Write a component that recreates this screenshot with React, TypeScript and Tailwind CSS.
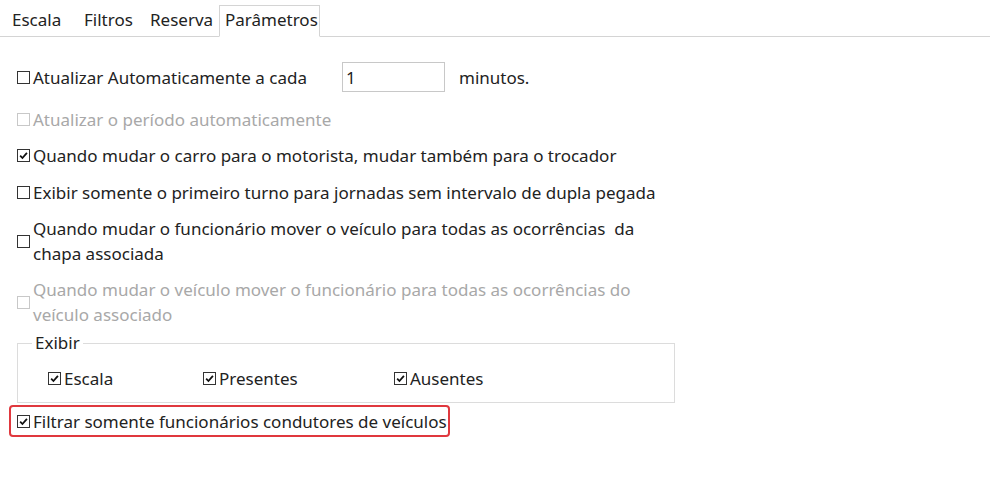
import React from "react";

type BoxProps = { checked?: boolean; disabled?: boolean };

const Box = ({ checked, disabled }: BoxProps) => (
  <span
    className={`inline-flex h-[13px] w-[13px] shrink-0 items-center justify-center border bg-white ${
      disabled ? "border-[#c8c8c8]" : "border-[#333]"
    }`}
  >
    {checked && (
      <svg viewBox="0 0 10 10" className="h-[9px] w-[9px]">
        <path d="M1.3 5.2 L3.8 7.8 L8.8 2" fill="none" stroke="#111" strokeWidth="2" />
      </svg>
    )}
  </span>
);

const Row = ({ checked, disabled, children }: BoxProps & { children: React.ReactNode }) => (
  <div className={`flex items-center gap-[3px] ${disabled ? "text-[#a8a8a8]" : ""}`}>
    <Box checked={checked} disabled={disabled} />
    <span>{children}</span>
  </div>
);

export default function App() {
  return (
    <div
      className="h-[491px] w-[990px] overflow-hidden bg-white text-[17px] leading-[25px] text-[#222]"
      style={{ fontFamily: '"Noto Sans", sans-serif' }}
    >
      {/* abas */}
      <div className="flex h-[37px] items-end border-b border-[#d4d4d4] pl-[12px]">
        <div className="h-[31px] w-[72px] pt-[2px]">Escala</div>
        <div className="h-[31px] w-[66px] pt-[2px]">Filtros</div>
        <div className="h-[31px] w-[69px] pt-[2px]">Reserva</div>
        <div className="-mb-px h-[32px] w-[101px] border border-[#d4d4d4] border-b-white bg-white pl-[5px] pt-[1px]">
          Parâmetros
        </div>
      </div>

      <div className="flex flex-col pl-[17px] pt-[25px]">
        <div className="flex items-center">
          <Row>Atualizar Automaticamente a cada</Row>
          <input
            defaultValue="1"
            className="ml-[35px] h-[30px] w-[103px] border border-[#c8c8c8] px-[3px] text-[17px] text-[#222] outline-none"
          />
          <span className="ml-[14px]">minutos.</span>
        </div>

        <div className="mt-[15px]">
          <Row disabled>Atualizar o período automaticamente</Row>
        </div>
        <div className="mt-[11px]">
          <Row checked>Quando mudar o carro para o motorista, mudar também para o trocador</Row>
        </div>
        <div className="mt-[12px]">
          <Row>Exibir somente o primeiro turno para jornadas sem intervalo de dupla pegada</Row>
        </div>
        <div className="mt-[11px] w-[650px]">
          <Row>Quando mudar o funcionário mover o veículo para todas as ocorrências&nbsp; da chapa associada</Row>
        </div>
        <div className="mt-[11px] w-[650px]">
          <Row disabled>Quando mudar o veículo mover o funcionário para todas as ocorrências do veículo associado</Row>
        </div>

        <fieldset className="mt-[6px] h-[70px] w-[658px] border border-[#dcdcdc] px-[30px]">
          <legend className="ml-[-16px] px-[3px] leading-[20px]">Exibir</legend>
          <div className="mt-[13px] flex items-center">
            <div className="w-[155px]">
              <Row checked>Escala</Row>
            </div>
            <div className="w-[191px]">
              <Row checked>Presentes</Row>
            </div>
            <Row checked>Ausentes</Row>
          </div>
        </fieldset>

        <div className="ml-[-8px] mt-[2px] flex h-[32px] w-[441px] items-center rounded-[4px] border-2 border-[#e0383e] pl-[6px]">
          <Row checked>Filtrar somente funcionários condutores de veículos</Row>
        </div>
      </div>
    </div>
  );
}
